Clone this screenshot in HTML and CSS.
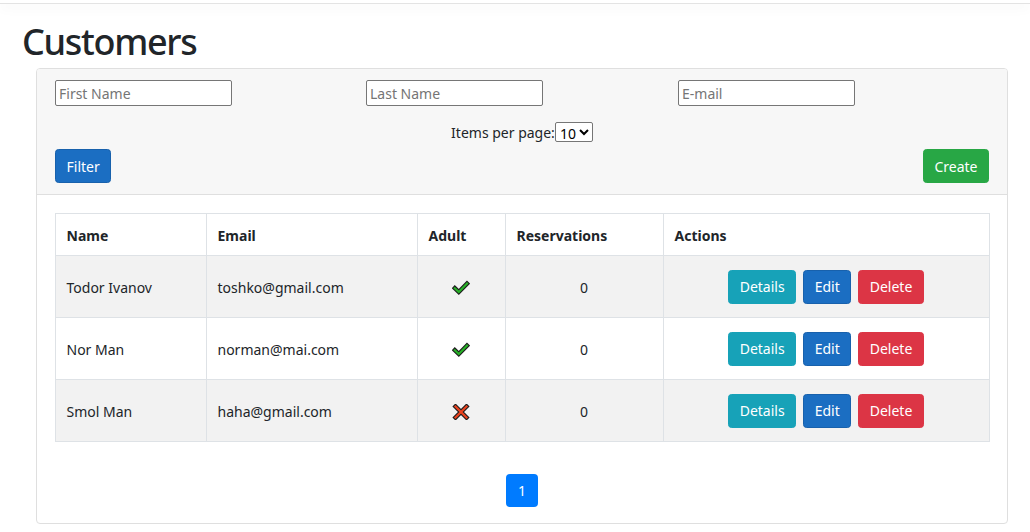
FILE: index.html
```html
<!DOCTYPE html>
<html lang="en">
<head>
<meta charset="utf-8">
<title>Customers</title>
<link rel="stylesheet" href="styles.css">
</head>
<body>
<div class="topbar"></div>
<main class="page">
  <h1 class="title">Customers</h1>
  <section class="card">
    <div class="card-header">
      <div class="filters">
        <div class="col"><input class="field" type="text" placeholder="First Name"></div>
        <div class="col"><input class="field" type="text" placeholder="Last Name"></div>
        <div class="col"><input class="field" type="text" placeholder="E-mail"></div>
      </div>
      <div class="perpage">
        <span>Items per page:</span><select class="pp-select"><option>10</option></select>
      </div>
      <div class="header-actions">
        <button class="btn btn-primary">Filter</button>
        <button class="btn btn-success">Create</button>
      </div>
    </div>
    <div class="card-body">
      <table class="table">
        <colgroup>
          <col class="c-name"><col class="c-email"><col class="c-adult"><col class="c-res"><col class="c-act">
        </colgroup>
        <thead>
          <tr><th>Name</th><th>Email</th><th>Adult</th><th>Reservations</th><th>Actions</th></tr>
        </thead>
        <tbody>
          <tr class="striped">
            <td class="txt">Todor Ivanov</td><td class="txt">toshko@gmail.com</td>
            <td class="center"><svg class="mark" width="18" height="16" viewBox="0 0 18 16"><path d="M2.8 8.2 L6.8 12 L15 3.6" fill="none" stroke="#1d1d1d" stroke-width="4.4" stroke-linecap="square"/><path d="M2.8 8.2 L6.8 12 L15 3.6" fill="none" stroke="#27b127" stroke-width="2.2" stroke-linecap="square"/></svg></td>
            <td class="center txt">0</td>
            <td class="center"><div class="acts"><button class="btn btn-info">Details</button><button class="btn btn-primary">Edit</button><button class="btn btn-danger">Delete</button></div></td>
          </tr>
          <tr>
            <td class="txt">Nor Man</td><td class="txt">norman@mai.com</td>
            <td class="center"><svg class="mark" width="18" height="16" viewBox="0 0 18 16"><path d="M2.8 8.2 L6.8 12 L15 3.6" fill="none" stroke="#1d1d1d" stroke-width="4.4" stroke-linecap="square"/><path d="M2.8 8.2 L6.8 12 L15 3.6" fill="none" stroke="#27b127" stroke-width="2.2" stroke-linecap="square"/></svg></td>
            <td class="center txt">0</td>
            <td class="center"><div class="acts"><button class="btn btn-info">Details</button><button class="btn btn-primary">Edit</button><button class="btn btn-danger">Delete</button></div></td>
          </tr>
          <tr class="striped">
            <td class="txt">Smol Man</td><td class="txt">haha@gmail.com</td>
            <td class="center"><svg class="mark" width="18" height="16" viewBox="0 0 18 16"><path d="M3.5 2.5 L14.5 13.5 M14.5 2.5 L3.5 13.5" fill="none" stroke="#1d1d1d" stroke-width="4.4" stroke-linecap="square"/><path d="M3.5 2.5 L14.5 13.5 M14.5 2.5 L3.5 13.5" fill="none" stroke="#ec4420" stroke-width="2.2" stroke-linecap="square"/></svg></td>
            <td class="center txt">0</td>
            <td class="center"><div class="acts"><button class="btn btn-info">Details</button><button class="btn btn-primary">Edit</button><button class="btn btn-danger">Delete</button></div></td>
          </tr>
        </tbody>
      </table>
      <nav class="pager"><a class="page-link">1</a></nav>
    </div>
  </section>
</main>
</body>
</html>
```

FILE: styles.css
```css
* { box-sizing: border-box; }
html, body { margin: 0; padding: 0; background: #fff; }
body {
  font-family: "Noto Sans", "Open Sans", sans-serif;
  font-size: 14px;
  line-height: 1.5;
  color: #212529;
  width: 1030px;
  height: 532px;
  overflow: hidden;
}
.topbar {
  height: 4px;
  border-bottom: 1px solid #e3e3e3;
  box-shadow: 0 4px 12px rgba(0,0,0,.05);
}
.page {
  padding: 0 22px 0 36px;
}
.title {
  margin: 14px 0 2px -14px;
  font-size: 36px;
  letter-spacing: -1.3px;
  line-height: 48px;
  font-weight: 500;
  color: #212529;
}
.card {
  border: 1px solid #dfdfdf;
  border-radius: 4px;
  background: #fff;
  width: 972px;
  overflow: hidden;
}
.card-header {
  background: #f7f7f7;
  border-bottom: 1px solid #dfdfdf;
  padding: 11px 18px 11px 18px;
}
.filters {
  display: grid;
  grid-template-columns: 311px 312px 311px;
}
.field {
  width: 177px;
  height: 26px;
  border: 1px solid #767676;
  border-radius: 2px;
  padding: 1px 3px;
  font-family: inherit;
  font-size: 14px;
  background: #fff;
  color: #212529;
}
.field::placeholder { color: #757575; }
.perpage {
  display: flex;
  justify-content: center;
  align-items: center;
  margin-top: 15px;
  height: 22px;
}
.pp-select {
  width: 38px;
  height: 20px;
  font-family: inherit;
  font-size: 14px;
  border: 1px solid #767676;
  border-radius: 2px;
  padding: 0;
  background: #fff;
  color: #000;
}
.header-actions {
  display: flex;
  justify-content: space-between;
  margin-top: 6px;
}
.btn {
  display: inline-flex;
  align-items: center;
  justify-content: center;
  height: 34px;
  padding: 0 10.5px;
  border: 1px solid transparent;
  border-radius: 3.5px;
  font-family: inherit;
  font-size: 14px;
  color: #fff;
  cursor: pointer;
}
.btn-primary { background: #1b6ec2; border-color: #1861ac; }
.btn-success { background: #28a745; border-color: #28a745; }
.btn-info { background: #17a2b8; border-color: #17a2b8; }
.btn-danger { background: #dc3545; border-color: #dc3545; }
.card-body {
  padding: 18px 18px 16px 18px;
  display: flex;
  flex-direction: column;
  align-items: center;
}
.table {
  width: 934px;
  border-collapse: collapse;
  table-layout: fixed;
  border: 1px solid #dee2e6;
}
.c-name { width: 151px; }
.c-email { width: 211px; }
.c-adult { width: 88px; }
.c-res { width: 158px; }
.c-act { width: 326px; }
.table th, .table td {
  border: 1px solid #dee2e6;
  padding: 0 11px;
  text-align: left;
  vertical-align: middle;
}
.table th {
  height: 42px;
  font-weight: 700;
  padding-top: 2px;
}
.table td { height: 62px; }
.table td.txt { padding-top: 2px; }
.striped td { background: #f2f2f2; }
.table td.center { text-align: center; }
.mark { display: inline-block; vertical-align: middle; }
.acts {
  display: flex;
  justify-content: center;
  gap: 7px;
}
.pager {
  margin-top: 32px;
  display: flex;
  justify-content: center;
}
.page-link {
  display: flex;
  align-items: center;
  justify-content: center;
  width: 32px;
  height: 33px;
  background: #007bff;
  color: #fff;
  border-radius: 4px;
  font-size: 14px;
}
```
